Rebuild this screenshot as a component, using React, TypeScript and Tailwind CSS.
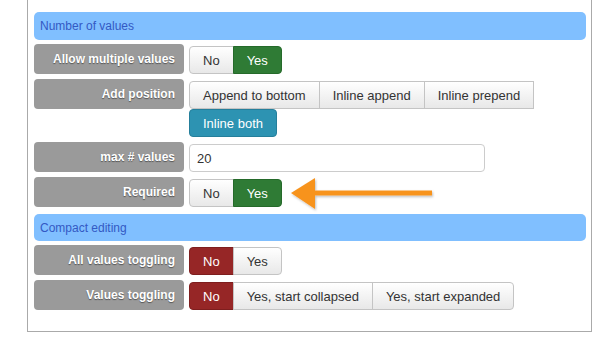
import React from 'react';

type Opt = { label: string; tone?: 'green' | 'red' | 'teal' };

const toneClass = {
  green: 'bg-[#2f7b35] border-[#256a2a] text-white',
  red: 'bg-[#962626] border-[#7e1e1e] text-white',
  teal: 'bg-[#2d93b2] border-[#257f9b] text-white',
};

const ButtonGroup = ({ options }: { options: Opt[] }) => (
  <div className="flex flex-wrap">
    {options.map((o, i) => (
      <button
        key={o.label}
        className={`h-[28px] px-[13px] border text-[13px] leading-none ${
          o.tone
            ? toneClass[o.tone]
            : 'bg-gradient-to-b from-white to-[#e8e8e8] border-[#c4c4c4] text-[#333]'
        } ${i === 0 ? 'rounded-l-[4px]' : '-ml-px'} ${i === options.length - 1 ? 'rounded-r-[4px]' : ''} ${
          o.label === 'Inline both' ? 'rounded-[4px] ml-0' : ''
        }`}
      >
        {o.label}
      </button>
    ))}
  </div>
);

const Row = ({ label, children }: { label: string; children: React.ReactNode }) => (
  <div className="flex items-start gap-[5px] mb-[5px]">
    <div className="w-[150px] h-[30px] shrink-0 rounded-[4px] bg-[#9a9a9a] flex items-center justify-end pr-[9px] text-[12px] font-bold text-white [text-shadow:0_1px_1px_rgba(0,0,0,0.45)]">
      {label}
    </div>
    <div className="pt-[2px] flex-1">{children}</div>
  </div>
);

const Header = ({ title, h }: { title: string; h: string }) => (
  <div className={`${h} rounded-[5px] bg-[#80bfff] flex items-center pl-[6px] text-[12px] text-[#3359c4]`}>
    {title}
  </div>
);

export default function App() {
  return (
    <div className="relative w-[598px] h-[343px] bg-white overflow-hidden font-['Liberation_Sans',Arial,sans-serif]">
      <div className="ml-[27px] w-[565px] border-x border-b border-[#aaa] pl-[6px] pr-[5px] pt-[12px] pb-[16px]">
        <Header title="Number of values" h="h-[28px]" />
        <div className="h-[4px]" />
        <Row label="Allow multiple values">
          <ButtonGroup options={[{ label: 'No' }, { label: 'Yes', tone: 'green' }]} />
        </Row>
        <Row label="Add position">
          <ButtonGroup
            options={[
              { label: 'Append to bottom' },
              { label: 'Inline append' },
              { label: 'Inline prepend' },
              { label: 'Inline both', tone: 'teal' },
            ]}
          />
        </Row>
        <Row label="max # values">
          <input
            readOnly
            value="20"
            className="w-[296px] h-[28px] border border-[#ccc] rounded-[4px] px-[7px] text-[13px] text-[#333] outline-none"
          />
        </Row>
        <Row label="Required">
          <ButtonGroup options={[{ label: 'No' }, { label: 'Yes', tone: 'green' }]} />
        </Row>
        <div className="h-[2px]" />
        <Header title="Compact editing" h="h-[27px]" />
        <div className="h-[4px]" />
        <Row label="All values toggling">
          <ButtonGroup options={[{ label: 'No', tone: 'red' }, { label: 'Yes' }]} />
        </Row>
        <Row label="Values toggling">
          <ButtonGroup
            options={[
              { label: 'No', tone: 'red' },
              { label: 'Yes, start collapsed' },
              { label: 'Yes, start expanded' },
            ]}
          />
        </Row>
      </div>
      <svg
        className="absolute left-[286px] top-[174px]"
        width="152"
        height="40"
        viewBox="0 0 152 40"
      >
        <defs>
          <filter id="sh" x="-10%" y="-30%" width="120%" height="160%">
            <feDropShadow dx="1" dy="1.5" stdDeviation="1.2" floodColor="#000" floodOpacity="0.25" />
          </filter>
        </defs>
        <g filter="url(#sh)" fill="#f7931e">
          <polygon points="5,19 29,4 29,35" />
          <rect x="27" y="16.5" width="119" height="5" />
        </g>
      </svg>
    </div>
  );
}
